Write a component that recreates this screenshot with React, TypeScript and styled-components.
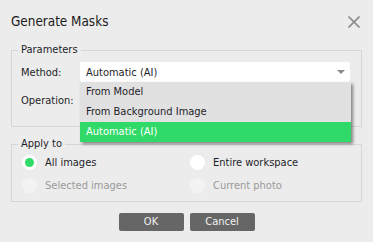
import React from 'react';
import styled, { createGlobalStyle } from 'styled-components';

const GlobalStyle = createGlobalStyle`
  html, body {
    margin: 0;
    padding: 0;
    background: #ececec;
  }
  body {
    font-family: 'DejaVu Sans Condensed', 'Noto Sans', sans-serif;
    font-size: 11px;
    color: #1e1e28;
  }
`;

const Dialog = styled.div`
  width: 373px;
  height: 242px;
  background: #ececec;
  display: flex;
  flex-direction: column;
  position: relative;
  overflow: hidden;
`;

const Header = styled.header`
  height: 43px;
  display: flex;
  align-items: center;
  justify-content: space-between;
  padding: 1px 13px 0 11px;
  box-sizing: border-box;
`;

const Title = styled.h1`
  margin: 0;
  font-size: 13.4px;
  font-weight: 400;
  color: #1a1a1a;
  line-height: 20px;
`;

const CloseBtn = styled.button`
  border: 0;
  padding: 0;
  background: transparent;
  width: 12px;
  height: 12px;
  display: flex;
  cursor: pointer;
`;

const Group = styled.fieldset`
  margin: 0 11px;
  padding: 0 0 0 6px;
  border: 1px solid #d6d6d6;
  min-width: 0;
  & + & {
    margin-top: 10px;
  }
`;

const Legend = styled.legend`
  padding: 0 3px;
  line-height: 14px;
  font-size: 11px;
  color: #1e1e28;
`;

const GroupBody = styled.div<{ $pad: string }>`
  padding: ${(p) => p.$pad};
`;

const FieldRow = styled.div`
  display: flex;
  align-items: center;
  height: 20px;
  position: relative;
  & + & {
    margin-top: 8px;
  }
`;

const Label = styled.span`
  width: 59px;
  flex: none;
`;

const Select = styled.div`
  flex: 1;
  height: 20px;
  background: #fff;
  border-radius: 2px;
  display: flex;
  align-items: center;
  justify-content: space-between;
  padding: 0 5px 0 6px;
  box-sizing: border-box;
`;

const Arrow = styled.span`
  width: 0;
  height: 0;
  margin-left: auto;
  border-left: 4px solid transparent;
  border-right: 4px solid transparent;
  border-top: 4px solid #8a8a8a;
`;

const Menu = styled.ul`
  position: absolute;
  top: 20px;
  left: 59px;
  right: -1px;
  margin: 0;
  padding: 0;
  list-style: none;
  background: #e1e1e1;
  box-shadow: 2px 2px 3px rgba(0, 0, 0, 0.45);
  z-index: 2;
`;

const MenuItem = styled.li<{ $active?: boolean }>`
  height: 20px;
  line-height: 20px;
  padding-left: 6px;
  background: ${(p) => (p.$active ? '#30da69' : 'transparent')};
  color: ${(p) => (p.$active ? '#fff' : '#1e1e28')};
`;

const RadioGrid = styled.div`
  display: grid;
  grid-template-columns: 168px 1fr;
  row-gap: 7px;
`;

const RadioOption = styled.label<{ $disabled?: boolean }>`
  display: flex;
  align-items: center;
  height: 16px;
  gap: 8px;
  color: ${(p) => (p.$disabled ? '#9a9a9a' : '#1e1e28')};
`;

const RadioDot = styled.span<{ $checked?: boolean; $disabled?: boolean }>`
  width: 15px;
  height: 15px;
  border-radius: 50%;
  background: ${(p) => (p.$disabled ? '#f3f3f3' : '#fff')};
  display: flex;
  align-items: center;
  justify-content: center;
  flex: none;
  &::after {
    content: '';
    width: 9px;
    height: 9px;
    border-radius: 50%;
    background: #30da69;
    display: ${(p) => (p.$checked ? 'block' : 'none')};
  }
`;

const Footer = styled.footer`
  display: flex;
  justify-content: center;
  gap: 6px;
  margin-top: 11px;
`;

const Button = styled.button`
  width: 65px;
  height: 18px;
  border: 0;
  border-radius: 2px;
  background: #666;
  color: #f2f2f2;
  font-family: inherit;
  font-size: 11px;
  padding: 0;
  line-height: 18px;
`;

const CloseIcon = () => (
  <svg width="12" height="12" viewBox="0 0 12 12">
    <path d="M0.5 0.5 L11.5 11.5 M11.5 0.5 L0.5 11.5" stroke="#8c8c8c" strokeWidth="1.6" />
  </svg>
);

const App: React.FC = () => {
  return (
    <>
      <GlobalStyle />
      <Dialog>
        <Header>
          <Title>Generate Masks</Title>
          <CloseBtn>
            <CloseIcon />
          </CloseBtn>
        </Header>
        <Group>
          <Legend>Parameters</Legend>
          <GroupBody $pad="5px 11px 16px 3px">
            <FieldRow>
              <Label>Method:</Label>
              <Select>
                <span>Automatic (AI)</span>
                <Arrow />
              </Select>
              <Menu>
                <MenuItem>From Model</MenuItem>
                <MenuItem>From Background Image</MenuItem>
                <MenuItem $active>Automatic (AI)</MenuItem>
              </Menu>
            </FieldRow>
            <FieldRow>
              <Label>Operation:</Label>
              <Select>
                <Arrow />
              </Select>
            </FieldRow>
          </GroupBody>
        </Group>
        <Group>
          <Legend>Apply to</Legend>
          <GroupBody $pad="3px 10px 8px 4px">
            <RadioGrid>
              <RadioOption>
                <RadioDot $checked />
                All images
              </RadioOption>
              <RadioOption>
                <RadioDot />
                Entire workspace
              </RadioOption>
              <RadioOption $disabled>
                <RadioDot $disabled />
                Selected images
              </RadioOption>
              <RadioOption $disabled>
                <RadioDot $disabled />
                Current photo
              </RadioOption>
            </RadioGrid>
          </GroupBody>
        </Group>
        <Footer>
          <Button>OK</Button>
          <Button>Cancel</Button>
        </Footer>
      </Dialog>
    </>
  );
};

export default App;
